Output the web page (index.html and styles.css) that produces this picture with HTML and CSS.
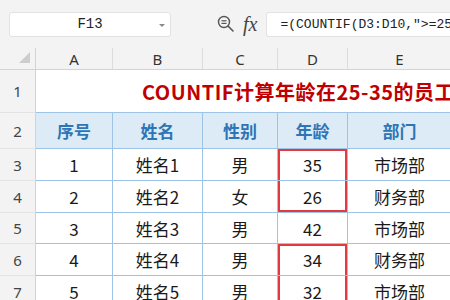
FILE: index.html
```html
<!DOCTYPE html>
<html>
  <head>
    <meta charset="utf-8" />
    <title>COUNTIF</title>
    <link rel="stylesheet" href="styles.css">
  </head>
  <body>
    <div class="toolbar">
      <div class="namebox">
        <span class="cellref">F13</span>
        <span class="caret"></span>
      </div>
      <svg class="zoom-icon" width="18" height="18" viewBox="0 0 18 18">
        <circle cx="7" cy="7" r="5.5" fill="none" stroke="#555" stroke-width="1.4" />
        <line x1="11" y1="11" x2="16" y2="16" stroke="#555" stroke-width="1.6" stroke-linecap="round" />
        <line x1="4.5" y1="5.8" x2="9.5" y2="5.8" stroke="#555" stroke-width="1.2" />
        <line x1="4.5" y1="8.4" x2="9.5" y2="8.4" stroke="#555" stroke-width="1.2" />
      </svg>
      <span class="fx">fx</span>
      <div class="formula">=(COUNTIF(D3:D10,"&gt;=25",D3:D10,"&lt;=35"))</div>
    </div>

    <div class="sheet">
      <div class="grid">
        <div class="corner"><span class="tri"></span></div>
        <div class="colhdr">A</div>
        <div class="colhdr">B</div>
        <div class="colhdr">C</div>
        <div class="colhdr">D</div>
        <div class="colhdr">E</div>
        <div class="colhdr">F</div>

        <div class="rowhdr">1</div>
        <div class="title">COUNTIF计算年龄在25-35的员工人数</div>

        <div class="rowhdr">2</div>
        <div class="cell head">序号</div>
        <div class="cell head">姓名</div>
        <div class="cell head">性别</div>
        <div class="cell head">年龄</div>
        <div class="cell head">部门</div>
        <div class="cell head"></div>

        <div class="rowhdr">3</div>
        <div class="cell">1</div>
        <div class="cell">姓名1</div>
        <div class="cell">男</div>
        <div class="cell box-top">35</div>
        <div class="cell">市场部</div>
        <div class="cell"></div>

        <div class="rowhdr">4</div>
        <div class="cell">2</div>
        <div class="cell">姓名2</div>
        <div class="cell">女</div>
        <div class="cell box-bottom">26</div>
        <div class="cell">财务部</div>
        <div class="cell"></div>

        <div class="rowhdr">5</div>
        <div class="cell">3</div>
        <div class="cell">姓名3</div>
        <div class="cell">男</div>
        <div class="cell">42</div>
        <div class="cell">市场部</div>
        <div class="cell"></div>

        <div class="rowhdr">6</div>
        <div class="cell">4</div>
        <div class="cell">姓名4</div>
        <div class="cell">男</div>
        <div class="cell box-top">34</div>
        <div class="cell">财务部</div>
        <div class="cell"></div>

        <div class="rowhdr">7</div>
        <div class="cell">5</div>
        <div class="cell">姓名5</div>
        <div class="cell">男</div>
        <div class="cell box-bottom">32</div>
        <div class="cell">市场部</div>
        <div class="cell"></div>
      </div>
    </div>
  </body>
</html>
```

FILE: styles.css
```css
* {
  margin: 0;
  padding: 0;
  box-sizing: border-box;
}

body {
  width: 450px;
  height: 300px;
  overflow: hidden;
  background-color: #ffffff;
  font-family: "Noto Sans CJK SC", "Noto Sans", sans-serif;
  color: #1a1a1a;
}

.toolbar {
  height: 48px;
  background-color: #f3f3f3;
  display: flex;
  align-items: center;
  padding-left: 9px;
  white-space: nowrap;
}

.namebox {
  width: 162px;
  height: 25px;
  background-color: #ffffff;
  border: 1px solid #e2e2e2;
  border-radius: 3px;
  display: flex;
  align-items: center;
  justify-content: center;
  position: relative;
}

.cellref {
  font-family: "Liberation Mono", monospace;
  font-size: 14px;
  color: #222;
}

.caret {
  position: absolute;
  right: 5px;
  top: 11px;
  border-left: 3px solid transparent;
  border-right: 3px solid transparent;
  border-top: 3px solid #888;
}

.zoom-icon {
  margin-left: 46px;
}

.fx {
  margin-left: 8px;
  font-family: "Liberation Serif", serif;
  font-style: italic;
  font-size: 20px;
  color: #444;
}

.formula {
  margin-left: 9px;
  flex: 1;
  height: 25px;
  background-color: #ffffff;
  border: 1px solid #e2e2e2;
  border-right: none;
  border-radius: 3px 0 0 3px;
  padding-left: 13px;
  font-family: "Liberation Mono", monospace;
  font-size: 13px;
  line-height: 23px;
  color: #222;
  overflow: hidden;
}

.sheet {
  height: 252px;
  overflow: hidden;
}

.grid {
  display: grid;
  grid-template-columns: 36px 77px 90px 75px 70px 104px 100px;
  grid-template-rows: 22px 43px 36px 32px 32px 31px 32px 32px;
  width: 552px;
}

.corner {
  background-color: #f3f3f3;
  border-right: 1px solid #d3d3d3;
  border-bottom: 1px solid #d3d3d3;
  position: relative;
}

.tri {
  position: absolute;
  left: 19px;
  top: 4px;
  border-left: 11px solid transparent;
  border-bottom: 11px solid #cdcdcd;
}

.colhdr {
  background-color: #f3f3f3;
  border-right: 1px solid #dcdcdc;
  border-bottom: 1px solid #d3d3d3;
  display: flex;
  align-items: center;
  justify-content: center;
  font-family: "Noto Sans", sans-serif;
  font-size: 15px;
  color: #333;
}

.rowhdr {
  background-color: #f3f3f3;
  border-right: 1px solid #d3d3d3;
  border-bottom: 1px solid #e3e3e3;
  display: flex;
  align-items: center;
  justify-content: center;
  font-family: "Noto Sans", sans-serif;
  font-size: 15px;
  color: #444;
}

.title {
  grid-column: 2 / -1;
  border-bottom: 1px solid #9dc3e6;
  display: flex;
  align-items: center;
  padding-left: 106px;
  white-space: nowrap;
  overflow: hidden;
  font-size: 20px;
  font-weight: bold;
  color: #c00000;
  letter-spacing: 0.5px;
}

.cell {
  border-right: 1px solid #9dc3e6;
  border-bottom: 1px solid #9dc3e6;
  display: flex;
  align-items: center;
  justify-content: center;
  font-size: 17px;
  color: #1a1a1a;
}

.head {
  background-color: #ddebf7;
  font-weight: bold;
  color: #2e75b6;
}

.box-top {
  box-shadow: inset 2px 0 0 #e23a3f, inset -2px 0 0 #e23a3f, inset 0 2px 0 #e23a3f;
}

.box-bottom {
  box-shadow: inset 2px 0 0 #e23a3f, inset -2px 0 0 #e23a3f, inset 0 -2px 0 #e23a3f;
}
```
